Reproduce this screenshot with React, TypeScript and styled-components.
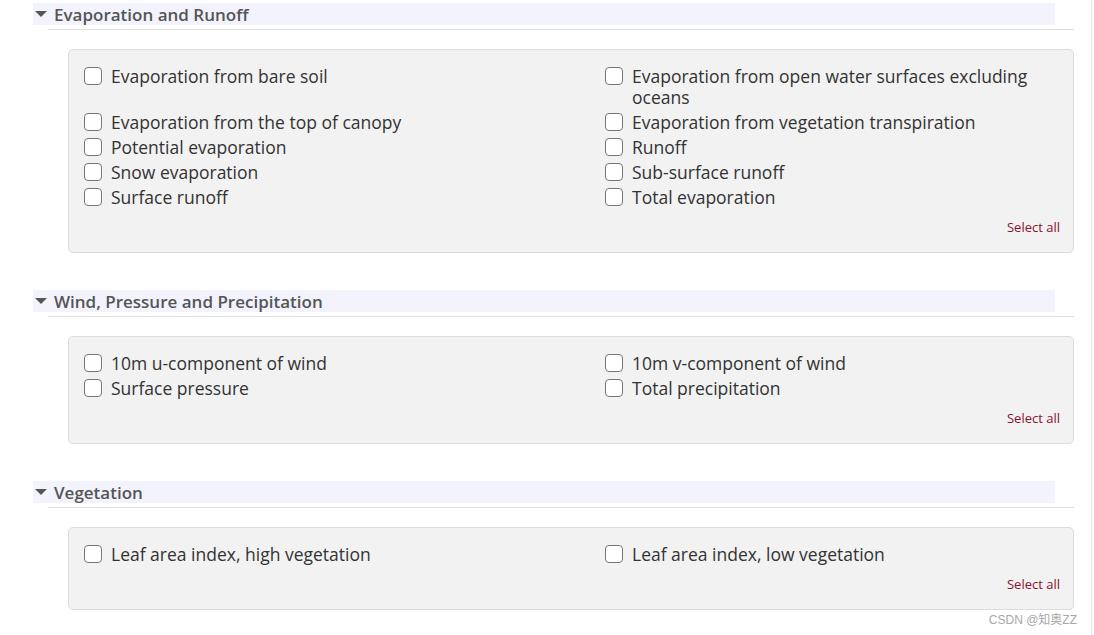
import styled, { createGlobalStyle } from 'styled-components'

const GlobalStyle = createGlobalStyle`
  html, body {
    margin: 0;
    padding: 0;
    background: #ffffff;
  }
  body {
    font-family: 'Open Sans', 'Noto Sans', sans-serif;
  }
`

const Page = styled.div`
  position: relative;
  width: 1092px;
  height: 635px;
  border-right: 1px solid #e6e6e6;
  padding-top: 3px;
  box-sizing: border-box;
  overflow: hidden;
`

const Section = styled.section`
  margin-bottom: 37.5px;
`

const Header = styled.div`
  display: flex;
  align-items: center;
  gap: 7px;
  margin-left: 33px;
  width: 1022px;
  height: 22px;
  background: #f2f3fd;
  color: #555;
  font-size: 17px;
  font-weight: 600;
  cursor: pointer;
`

const Caret = styled.span`
  width: 0;
  height: 0;
  margin-left: 2px;
  border-left: 6px solid transparent;
  border-right: 6px solid transparent;
  border-top: 6px solid #555;
`

const Rule = styled.div`
  margin: 3.5px 0 0 48px;
  width: 1026px;
  height: 1px;
  background: #dedede;
`

const Box = styled.div`
  margin: 19px 0 0 68px;
  width: 1006px;
  box-sizing: border-box;
  padding: 16px 13px 16px 15px;
  background: #f2f2f2;
  border: 1px solid #dcdcdc;
  border-radius: 5px;
`

const Grid = styled.div`
  display: grid;
  grid-template-columns: 521px 1fr;
  row-gap: 4px;
`

const Item = styled.label`
  display: flex;
  align-items: flex-start;
  gap: 9px;
  font-size: 17.5px;
  line-height: 21px;
  color: #333;
  padding-right: 30px;
`

const Check = styled.span`
  flex: none;
  width: 18px;
  height: 18px;
  margin-top: 1.5px;
  box-sizing: border-box;
  border: 1.5px solid #767676;
  border-radius: 4px;
  background: #fff;
`

const SelectAll = styled.div`
  margin-top: 10px;
  text-align: right;
  font-size: 13px;
  line-height: 18px;
  color: #8a1030;
  cursor: pointer;
`

const Watermark = styled.div`
  position: absolute;
  right: 14px;
  bottom: 8px;
  font-family: 'Liberation Sans', 'Noto Sans CJK SC', sans-serif;
  font-size: 12px;
  color: #a8a8a8;
`

const sections: { title: string; items: string[] }[] = [
  {
    title: 'Evaporation and Runoff',
    items: [
      'Evaporation from bare soil',
      'Evaporation from open water surfaces excluding oceans',
      'Evaporation from the top of canopy',
      'Evaporation from vegetation transpiration',
      'Potential evaporation',
      'Runoff',
      'Snow evaporation',
      'Sub-surface runoff',
      'Surface runoff',
      'Total evaporation',
    ],
  },
  {
    title: 'Wind, Pressure and Precipitation',
    items: [
      '10m u-component of wind',
      '10m v-component of wind',
      'Surface pressure',
      'Total precipitation',
    ],
  },
  {
    title: 'Vegetation',
    items: ['Leaf area index, high vegetation', 'Leaf area index, low vegetation'],
  },
]

const App = () => {
  return (
    <>
      <GlobalStyle />
      <Page>
        {sections.map((s) => (
          <Section key={s.title}>
            <Header>
              <Caret />
              {s.title}
            </Header>
            <Rule />
            <Box>
              <Grid>
                {s.items.map((it) => (
                  <Item key={it}>
                    <Check />
                    {it}
                  </Item>
                ))}
              </Grid>
              <SelectAll>Select all</SelectAll>
            </Box>
          </Section>
        ))}
        <Watermark>CSDN @知奥ZZ</Watermark>
      </Page>
    </>
  )
}

export default App
